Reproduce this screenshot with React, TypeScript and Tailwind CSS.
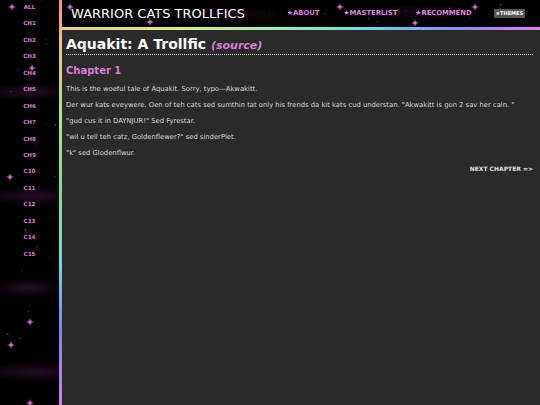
import { useMemo } from 'react';

const chapters = ['ALL', 'CH1', 'CH2', 'CH3', 'CH4', 'CH5', 'CH6', 'CH7', 'CH8', 'CH9', 'C10', 'C11', 'C12', 'C13', 'C14', 'C15'];

const sparkles = [
  [12, 7], [70, 7], [32, 68], [10, 177], [30, 322], [11, 345], [30, 403], [340, 7], [475, 7], [415, 23], [150, 22],
];

function Starfield() {
  // fixed seed so the sky is the same every render
  const dots = useMemo(() => {
    let s = 7;
    const rnd = () => {
      s = (s * 16807) % 2147483647;
      return s / 2147483647;
    };
    return Array.from({ length: 320 }).map(() => ({
      x: rnd() * 540,
      y: rnd() * 405,
      r: 0.25 + rnd() * 0.35,
      o: 0.2 + rnd() * 0.5,
    }));
  }, []);

  return (
    <svg className="absolute inset-0" width="540" height="405" viewBox="0 0 540 405">
      <defs>
        <radialGradient id="neb">
          <stop offset="0%" stopColor="#6a2266" stopOpacity="0.35" />
          <stop offset="100%" stopColor="#6a2266" stopOpacity="0" />
        </radialGradient>
        <radialGradient id="glow">
          <stop offset="0%" stopColor="#ff8cff" stopOpacity="0.8" />
          <stop offset="100%" stopColor="#ff8cff" stopOpacity="0" />
        </radialGradient>
      </defs>
      <ellipse cx="30" cy="92" rx="45" ry="9" fill="url(#neb)" />
      <ellipse cx="35" cy="196" rx="50" ry="11" fill="url(#neb)" />
      <ellipse cx="28" cy="288" rx="45" ry="9" fill="url(#neb)" />
      <ellipse cx="35" cy="372" rx="50" ry="11" fill="url(#neb)" />
      <ellipse cx="230" cy="14" rx="60" ry="8" fill="url(#neb)" opacity="0.6" />
      <ellipse cx="420" cy="12" rx="60" ry="8" fill="url(#neb)" opacity="0.6" />
      {dots.map((d, i) => (
        <circle key={i} cx={d.x} cy={d.y} r={d.r} fill="#ffffff" opacity={d.o} />
      ))}
      {sparkles.map(([x, y], i) => (
        <g key={i} transform={`translate(${x} ${y})`}>
          <circle r="3" fill="url(#glow)" />
          <path d="M0,-4.5 L0.5,-0.5 L4.5,0 L0.5,0.5 L0,4.5 L-0.5,0.5 L-4.5,0 L-0.5,-0.5 Z" fill="#e87ce8" />
        </g>
      ))}
    </svg>
  );
}

export default function App() {
  return (
    <div className="relative h-[405px] w-[540px] overflow-hidden bg-black font-['DejaVu_Sans','Verdana',sans-serif]">
      <Starfield />

      <div className="relative flex h-full">
        {/* 사이드 목차 */}
        <nav className="-mt-[1px] flex w-[59px] flex-col items-center">
          {chapters.map((c) => (
            <a key={c} className="block h-[16.45px] text-[5.6px] font-bold leading-[16.45px] text-[#d67fd6]">
              {c}
            </a>
          ))}
        </nav>

        {/* 세로 무지개 선 */}
        <div className="w-[3px] bg-[linear-gradient(to_bottom,#f0907c_0%,#f2c080_10%,#a8e67c_30%,#80e090_45%,#6fd8e0_65%,#7c86f0_82%,#d47ee8_100%)]" />

        <div className="flex flex-1 flex-col">
          {/* 헤더 */}
          <header className="flex h-[27px] items-center pl-[9px]">
            <span className="text-[13px] leading-none text-white">WARRIOR CATS TROLLFICS</span>
            <a className="ml-[42px] text-[6.8px] font-bold text-[#dd82dd]">★ABOUT</a>
            <a className="ml-[24px] text-[6.8px] font-bold text-[#dd82dd]">★MASTERLIST</a>
            <a className="ml-[18px] text-[6.8px] font-bold text-[#dd82dd]">★RECOMMEND</a>
            <span className="ml-[22px] bg-[#555555] px-[2px] py-[2px] text-[5px] font-bold leading-none text-white">★THEMES</span>
          </header>

          {/* 가로 무지개 선 */}
          <div className="h-[3px] bg-[linear-gradient(to_right,#f5c890_0%,#d8ef88_25%,#8fe8c0_50%,#6ad8e8_65%,#8a8cf0_82%,#e07ee8_100%)]" />

          {/* 본문 */}
          <main className="flex-1 bg-[#2a2a2a] pl-[4px] pr-[7px] pt-[6px]">
            <h1 className="border-b border-dotted border-[#dddddd] text-[14px] font-bold leading-[16px] text-white">
              Aquakit: A Trollfic <i className="text-[11px] text-[#d67fd6]">(source)</i>
            </h1>
            <h2 className="mt-[10px] text-[10px] font-bold leading-[12px] text-[#d67fd6]">Chapter 1</h2>
            <div className="mt-[4px] text-[6.8px] leading-[16px] text-[#d8d8d8]">
              <p>This is the woeful tale of Aquakit. Sorry, typo—Akwakitt.</p>
              <p>Der wur kats eveywere. Oen of teh cats sed sumthin tat only his frends da kit kats cud understan. "Akwakitt is gon 2 sav her caln. "</p>
              <p>"gud cus it in DAYNJUR!" Sed Fyrestar.</p>
              <p>"wil u tell teh catz, Goldenflewer?" sed sinderPlet.</p>
              <p>"k" sed Glodenflwur.</p>
              <p className="text-right text-[6px] font-bold text-[#e0e0e0]">NEXT CHAPTER =&gt;</p>
            </div>
          </main>
        </div>
      </div>
    </div>
  );
}
